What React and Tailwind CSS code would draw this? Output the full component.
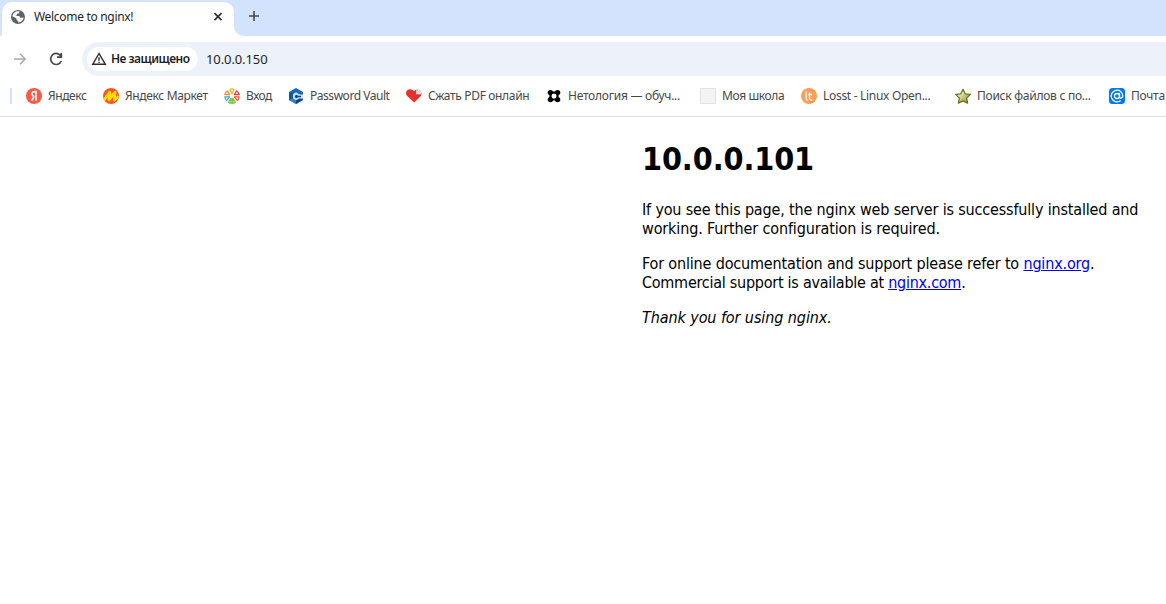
import React from "react";

const ui = "font-['Noto_Sans','Open_Sans',sans-serif]";

function Globe() {
  return (
    <svg className="h-4 w-4 shrink-0" viewBox="0 0 16 16">
      <circle cx="8" cy="8" r="7" fill="#5f6368" />
      <path d="M9.600 2.600 8.900 4.200 7 4.700 6.800 6.300 5.400 7h3.800l1.200 1.800h1.800l1.400-.2c-.3 2.700-2.500 4.900-5.400 5V12L6.600 10.900 6.300 9.200 2.500 7.200C2.900 4.400 5.200 2.300 8 2.300z" fill="#fff" />
    </svg>
  );
}

function Yandex() {
  return (
    <svg className="h-4 w-4 shrink-0" viewBox="0 0 16 16">
      <circle cx="8" cy="8" r="8" fill="#fa5a45" />
      <path d="M10 12.800V3.600H8.500C6.900 3.600 6 4.500 6 5.900c0 1.400.8 2 2.300 2.800M8.200 8.500 5.500 12.800" fill="none" stroke="#fff" strokeWidth="1.600" />
    </svg>
  );
}

function Market() {
  return (
    <svg className="h-4 w-4 shrink-0" viewBox="0 0 16 16">
      <defs><clipPath id="disc"><circle cx="8" cy="8" r="8" /></clipPath></defs>
      <g clipPath="url(#disc)">
        <rect width="16" height="16" fill="#ff5226" />
        <path d="M0 13.500 6.800 4.200 6 11.800 12 4.200 11.300 12 15.500 8.500" fill="none" stroke="#ffdb0a" strokeWidth="2.900" strokeLinejoin="round" />
      </g>
    </svg>
  );
}

function Login() {
  return (
    <svg className="h-4 w-4 shrink-0" viewBox="0 0 16 16" fill="none" strokeWidth="1.200" strokeLinejoin="round">
      <path d="M8 5.800 5.900 1.400Q8 .2 10.100 1.400z" stroke="#f6b11c" />
      <path d="M10.300 6.700 12.600 2.900Q14.700 4.300 15.200 6.700z" stroke="#e2323f" />
      <path d="M10.400 8.800H15.200Q15 11.300 13.400 12.700z" stroke="#e6552b" />
      <path d="M8.700 10.200 11.500 14.300Q10.500 15.200 8.700 15.300z" stroke="#73b93c" />
      <path d="M7.200 10.200V15.300Q5.500 15.200 4.400 14.300z" stroke="#73b93c" />
      <path d="M5.600 8.800H.8Q1 11.300 2.600 12.700z" stroke="#2eaadc" />
      <path d="M5.700 6.700 3.400 2.900Q1.300 4.300.8 6.700z" stroke="#f28a2e" />
    </svg>
  );
}

function Vault() {
  return (
    <svg className="h-4 w-4 shrink-0" viewBox="0 0 16 16">
      <path d="m8 0 7 3.900v8.200L8 16l-7-3.900V3.900z" fill="#1767b2" />
      <path d="m1 3.900 4 2.400v4.200L1 12.100z" fill="#0f5aa5" />
      <path d="m1 12.100 4-1.800 3 1.900V16z" fill="#2f80cc" />
      <path d="M8 4.300 5 6.200v4.200l3 1.800 3.500-1.700H15V6.500h-3.500z" fill="#d8e2ec" />
      <path d="M8.300 6.800 6.800 7.700v1.600l1.500.9 2-1H13V7.800h-2.700z" fill="#0e4a8c" />
      <path d="m8 12.500 3.500-2L15 12.100 8 16z" fill="#0e4a8c" />
    </svg>
  );
}

function Heart() {
  return (
    <svg className="h-4 w-4 shrink-0" viewBox="0 0 16 16">
      <path d="M8.200 14.500.9 7.700C-.4 6-.2 3.700 1.300 2.300 3 .8 5.400 1 7 2.300L8 3.200C9.500 1.400 12 .9 13.800 2.300c1.900 1.500 2.200 4.200.8 6z" fill="#e5322d" />
      <path d="M10.300 1.600V6.300h5.200C15.500 3.500 13.500 1.500 10.300 1.600z" fill="#fff" />
      <path d="M10.800 1.700 14.900 5.700" fill="none" stroke="#f3a19f" strokeWidth="1" />
    </svg>
  );
}

function Netology() {
  return (
    <svg className="h-4 w-4 shrink-0" viewBox="0 0 16 16">
      <path d="M4.500 4.700h7v6.800h-7z" fill="none" stroke="#000" strokeWidth="2.200" />
      <g fill="#000"><circle cx="4.400" cy="4.600" r="2.700" /><circle cx="11.600" cy="4.600" r="2.700" /><circle cx="4.400" cy="11.600" r="2.700" /><circle cx="11.600" cy="11.600" r="2.700" /></g>
      <path d="M6 6.100h4v4H6z" fill="#fff" />
    </svg>
  );
}

function Losst() {
  return (
    <svg className="h-4 w-4 shrink-0" viewBox="0 0 16 16">
      <circle cx="8" cy="8" r="8" fill="#ff9d52" />
      <path d="M5.200 3.500v7.200q0 1.300 1.500 1.300M8.500 4.500v6q0 1.500 1.500 1.500h1.300M7.500 6.500h3.500" fill="none" stroke="#fff" strokeWidth="1.300" />
    </svg>
  );
}

function Star() {
  return (
    <svg className="h-4 w-4 shrink-0" viewBox="0 0 16 16">
      <defs><linearGradient id="olive" x1="0" y1="0" x2="1" y2="1"><stop offset=".2" stopColor="#f5f5d8" /><stop offset="1" stopColor="#87871a" /></linearGradient></defs>
      <path d="m8 1.300 2.200 4.500 5.100.6-3.600 3.700.9 5L8 12.900l-4.600 2.200.9-5L.7 6.400l5.100-.6z" fill="url(#olive)" stroke="#6c6c16" strokeWidth="1.200" strokeLinejoin="round" />
    </svg>
  );
}

function Mail() {
  return (
    <svg className="h-4 w-4 shrink-0" viewBox="0 0 16 16">
      <rect width="16" height="16" rx="3.500" fill="#07f" />
      <circle cx="8" cy="8" r="2.500" fill="none" stroke="#fff" strokeWidth="1.300" />
      <path d="M10.500 5.500v3.300c0 2 3.300 1.700 3.300-.8A5.800 5.800 0 1 0 11.300 12.800" fill="none" stroke="#fff" strokeWidth="1.300" strokeLinecap="round" />
    </svg>
  );
}

const bookmarks = [
  { label: "Яндекс", icon: <Yandex />, box: "w-[77px]", track: "tracking-[-0.42px]" },
  { label: "Яндекс Маркет", icon: <Market />, box: "w-[121px]", track: "tracking-[-0.34px]" },
  { label: "Вход", icon: <Login />, box: "w-[64px]", track: "tracking-[-0.5px]" },
  { label: "Password Vault", icon: <Vault />, box: "w-[118px]", track: "tracking-[-0.46px]" },
  { label: "Сжать PDF онлайн", icon: <Heart />, box: "w-[140px]", track: "tracking-[-0.34px]" },
  { label: "Нетология — обуч...", icon: <Netology />, box: "w-[154px]", track: "tracking-[-0.25px]" },
  { label: "Моя школа", icon: <div className="h-4 w-4 shrink-0 border border-[#e3e3e3] bg-[#f3f3f3]" />, box: "w-[101px]", track: "tracking-[-0.38px]" },
  { label: "Losst - Linux Open...", icon: <Losst />, box: "w-[154px]", track: "tracking-[-0.3px]" },
  { label: "Поиск файлов с по...", icon: <Star />, box: "w-[154px]", track: "tracking-[-0.26px]" },
  { label: "Почта", icon: <Mail />, box: "w-[70px]", track: "tracking-[-0.25px]" },
];

function TabStrip() {
  return (
    <div className="flex h-9 bg-[#d3e3fd]">
      <div className="flex w-[2px] flex-col justify-end bg-white"><div className="h-9 rounded-br-[2px] bg-[#d3e3fd]" /></div>
      <div className="flex w-[232px] flex-col bg-[#d3e3fd] pt-[2px]">
        <div className="flex h-[34px] items-center rounded-t-[10px] bg-white pr-[10px] pb-[4px] pl-[8px]">
          <Globe />
          <span className="ml-2 flex-1 text-[12px] whitespace-nowrap tracking-[-0.31px] text-[#1f1f1f]">Welcome to nginx!</span>
          <svg className="h-3 w-3" viewBox="0 0 12 12"><path d="m2.500 2.200 7 7m0-7-7 7" stroke="#303134" strokeWidth="1.700" /></svg>
        </div>
      </div>
      <div className="flex-1 bg-white">
        <div className="h-9 rounded-bl-[10px] bg-[#d3e3fd] pt-[10px] pl-[14px]">
          <svg className="h-3 w-3" viewBox="0 0 12 12"><path d="M6 1v10M1 6h10" stroke="#474747" strokeWidth="1.600" /></svg>
        </div>
      </div>
    </div>
  );
}

function Toolbar() {
  return (
    <div className="flex h-[46px] items-center overflow-hidden pl-3">
      <svg className="h-4 w-4 shrink-0" viewBox="0 0 16 16"><path d="M2 8h11M8 2.800 13.200 8 8 13.200" fill="none" stroke="#aaa" strokeWidth="1.500" /></svg>
      <svg className="ml-5 h-4 w-4 shrink-0" viewBox="0 0 16 16"><path d="M13.200 5.700A5.500 5.500 0 1 0 13.300 10M13.300 2v4.200H9" fill="none" stroke="#474747" strokeWidth="1.700" /></svg>
      <div className="ml-[18px] flex h-[34px] flex-1 items-center rounded-l-full bg-[#edf1fa] pl-[5px]">
        <div className="flex h-6 w-[111px] items-center rounded-full bg-white pl-[4px]">
          <svg className="h-4 w-4 shrink-0" viewBox="0 0 16 16"><path d="M8 2.500 1.700 13.300h12.600zM8 6.200v3.600M8 10.700v1.400" fill="none" stroke="#303030" strokeWidth="1.400" /></svg>
          <span className="ml-[4px] whitespace-nowrap text-[12px] font-semibold tracking-[-0.52px] text-[#1f1f1f]">Не защищено</span>
        </div>
        <span className="ml-[8px] text-[13px] leading-[18px] tracking-[-0.1px] text-[#1f1f1f]">10.0.0.150</span>
      </div>
    </div>
  );
}

export default function App() {
  return (
    <div className={`flex h-[604px] w-[1166px] flex-col overflow-hidden bg-white ${ui}`}>
      <TabStrip />
      <Toolbar />
      <div className="flex h-[35px] items-start overflow-hidden border-b border-[#dfdfdf] pt-[6px]">
        <div className="mr-[14px] ml-[10px] h-4 w-[2px] shrink-0 bg-[#d3e3fd]" />
        {bookmarks.map((b) => (
          <div key={b.label} className={`flex shrink-0 items-start gap-[6px] ${b.box}`}>
            {b.icon}
            <span className={`text-[12px] leading-4 whitespace-nowrap text-[#474747] ${b.track}`}>{b.label}</span>
          </div>
        ))}
      </div>
      <main className="ml-[642px] w-[524px] font-['DejaVu_Sans_Condensed','DejaVu_Sans',sans-serif] text-[16px] leading-[19px] text-black">
        <h1 className="mt-[23px] text-[32px] leading-[39px] font-bold tracking-[-0.1px]">10.0.0.101</h1>
        <p className="mt-[21px] whitespace-nowrap"><span className="tracking-[-0.165px]">If you see this page, the nginx web server is successfully installed and</span><br /><span className="tracking-[-0.137px]">working. Further configuration is required.</span></p>
        <p className="mt-4 whitespace-nowrap"><span className="tracking-[-0.165px]">For online documentation and support please refer to <a className="text-[#0000ee] underline">nginx.org</a>.</span><br /><span className="tracking-[-0.255px]">Commercial support is available at <a className="text-[#0000ee] underline">nginx.com</a>.</span></p>
        <p className="mt-4 italic"><span className="tracking-[-0.09px]">Thank you for using nginx.</span></p>
      </main>
    </div>
  );
}
